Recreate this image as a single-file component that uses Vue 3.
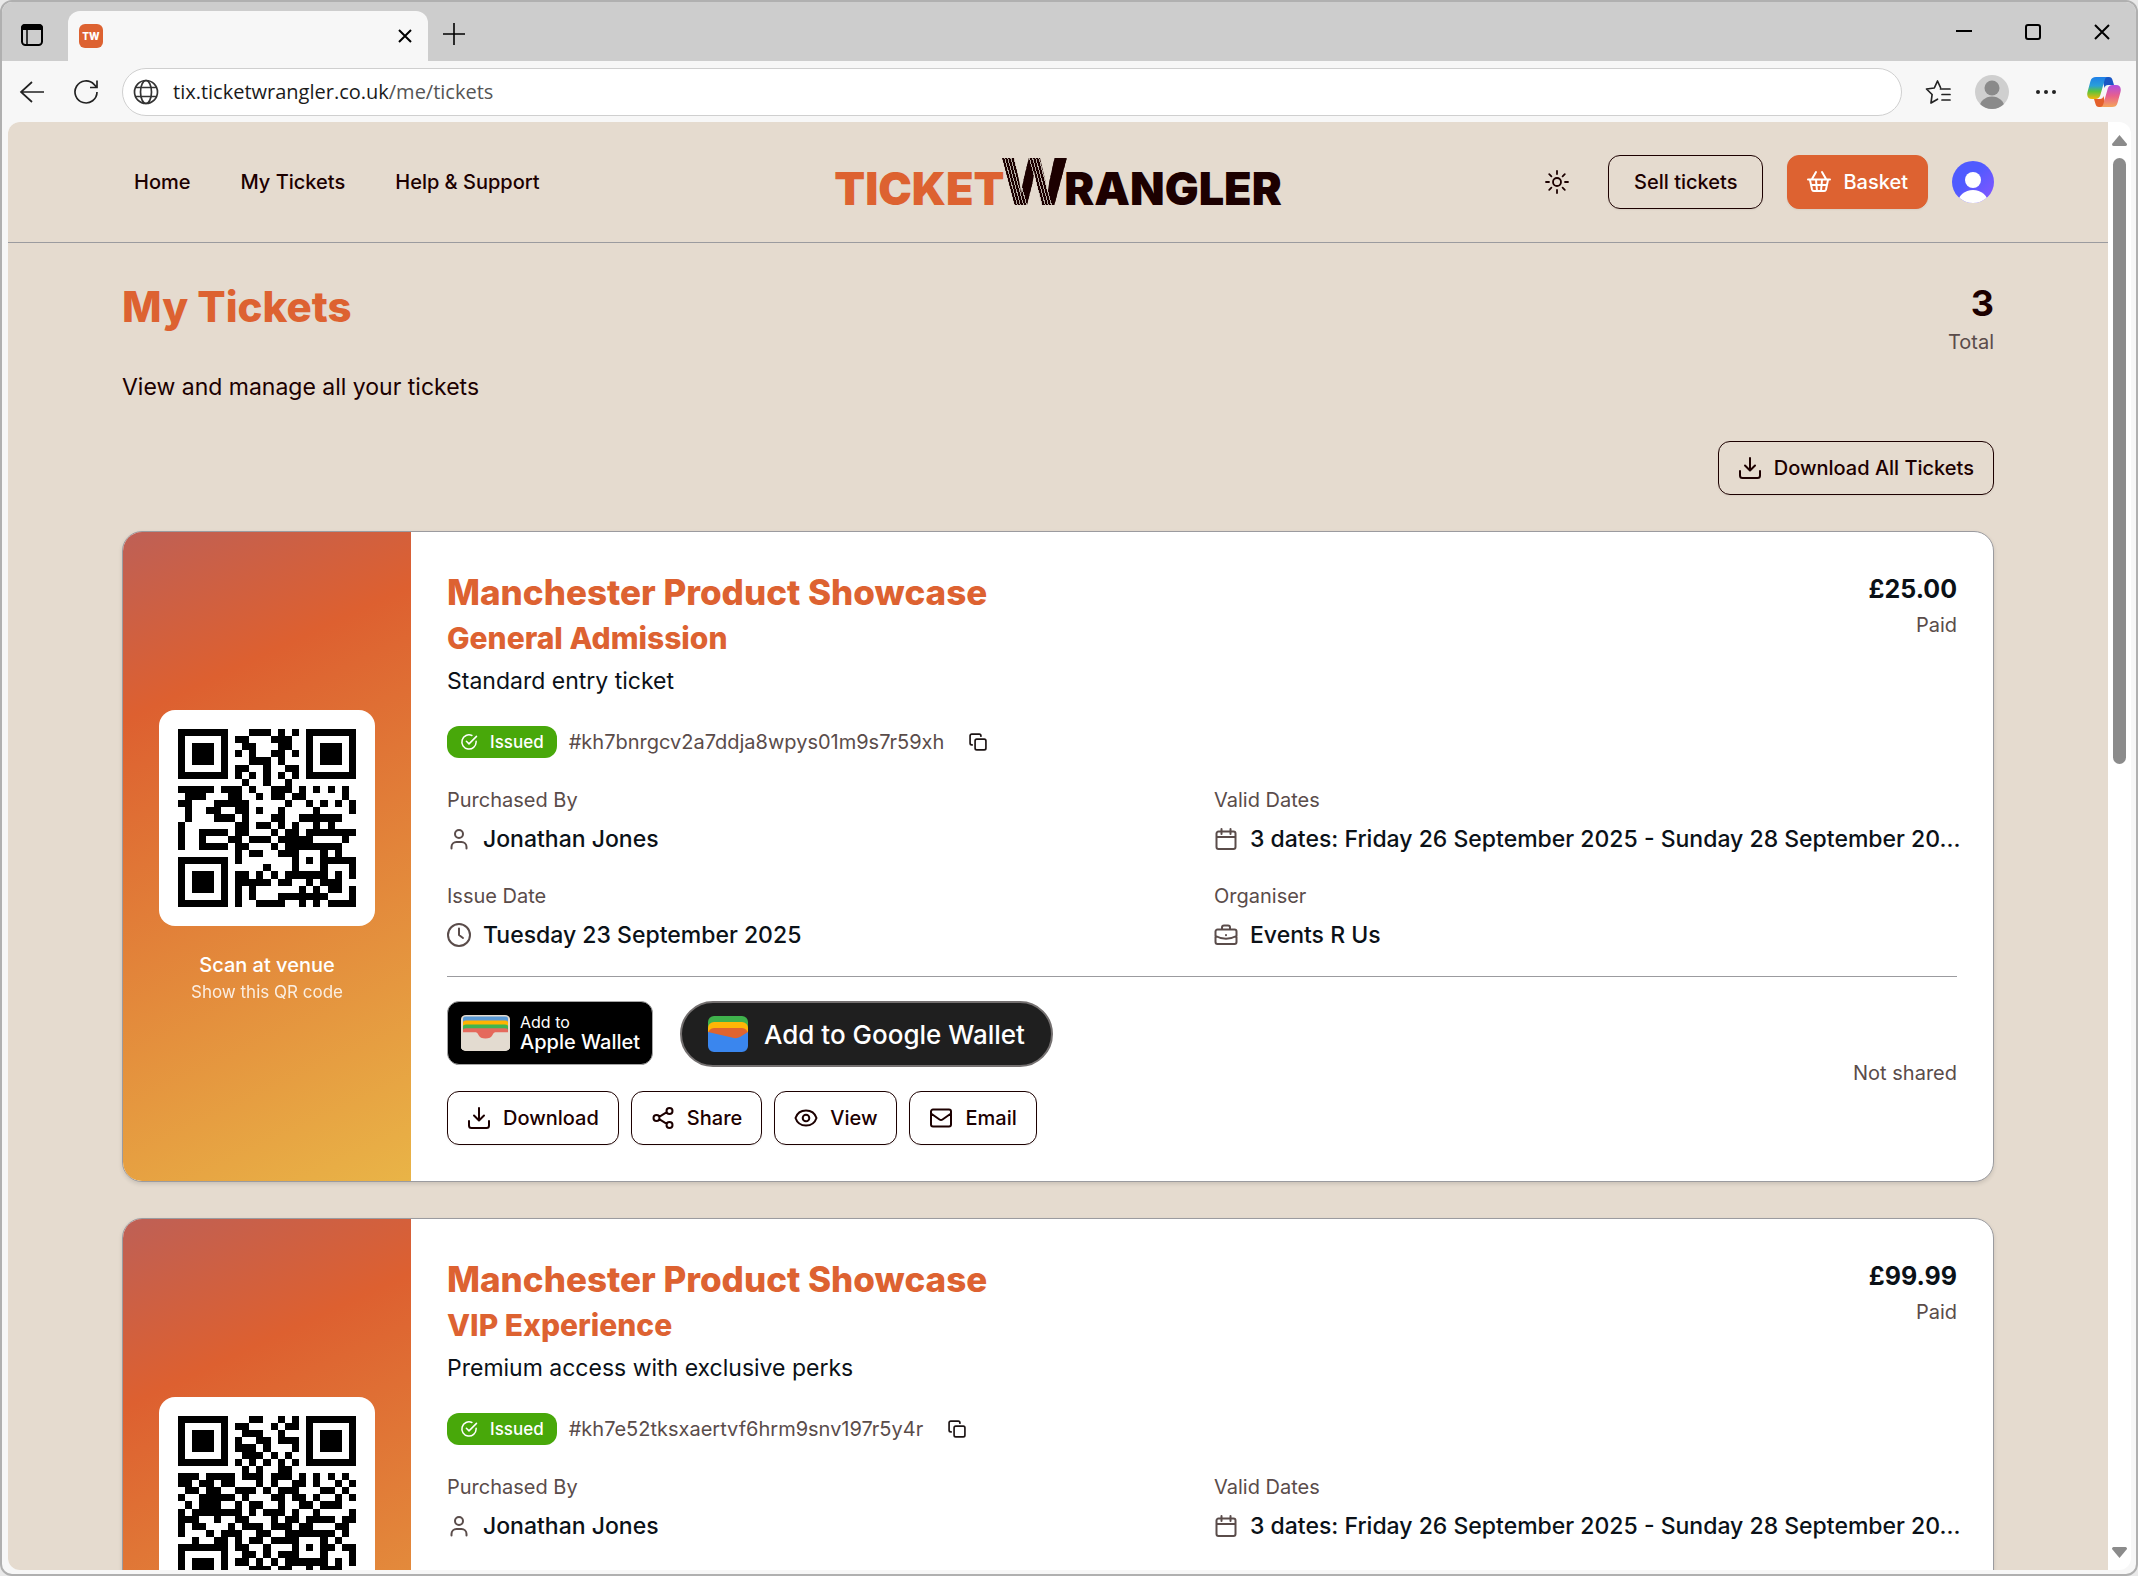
<template>
  <div class="window">
    <div class="tabstrip">
      <button class="strip-btn workspace" aria-label="Tab actions">
        <svg width="24" height="24" viewBox="0 0 24 24" fill="none" stroke="#000" stroke-width="2">
          <rect x="2" y="2" width="20" height="20" rx="3.5" />
          <path d="M2 6V5a3 3 0 0 1 3-3h14a3 3 0 0 1 3 3v1z" fill="#000" />
          <path d="M7 7v15" stroke-width="1.5" />
        </svg>
      </button>
      <div class="tab">
        <span class="favicon">TW</span>
        <button class="tab-close" aria-label="Close tab">
          <svg width="14" height="14" viewBox="0 0 14 14" stroke="#000" stroke-width="2"><path d="M1 1l12 12M13 1L1 13" /></svg>
        </button>
      </div>
      <button class="strip-btn new-tab" aria-label="New tab">
        <svg width="22" height="22" viewBox="0 0 22 22" stroke="#000" stroke-width="1.6"><path d="M11 0v22M0 11h22" /></svg>
      </button>
      <div class="controls">
        <button class="control" aria-label="Minimise">
          <svg width="16" height="16" viewBox="0 0 16 16" stroke="#000" stroke-width="2"><path d="M0 7h16" /></svg>
        </button>
        <button class="control" aria-label="Maximise">
          <svg width="16" height="16" viewBox="0 0 16 16" fill="none" stroke="#000" stroke-width="2"><rect x="1" y="1" width="14" height="14" rx="2" /></svg>
        </button>
        <button class="control" aria-label="Close">
          <svg width="16" height="16" viewBox="0 0 16 16" stroke="#000" stroke-width="2"><path d="M1 1l14 14M15 1L1 15" /></svg>
        </button>
      </div>
    </div>

    <div class="toolbar">
      <button class="tool" aria-label="Back">
        <svg width="26" height="26" viewBox="0 0 26 26" fill="none" stroke="#222" stroke-width="1.7"><path d="M25 13H2M13 3L2 13l11 10" /></svg>
      </button>
      <button class="tool" aria-label="Refresh">
        <svg width="26" height="26" viewBox="0 0 26 26" fill="none" stroke="#222" stroke-width="1.7"><path d="M24 13a11 11 0 1 1-3-7.6L23.500 8M24 1.500V8.500H17" /></svg>
      </button>
      <div class="address">
        <svg width="26" height="26" viewBox="0 0 26 26" fill="none" stroke="#333" stroke-width="1.7">
          <circle cx="13" cy="13" r="11.500" />
          <ellipse cx="13" cy="13" rx="5.500" ry="11.500" />
          <path d="M2.500 8.500h21M2.500 17.500h21" />
        </svg>
        <span class="url">tix.ticketwrangler.co.uk<span class="path">/me/tickets</span></span>
      </div>
      <button class="tool" aria-label="Favourites">
        <svg width="26" height="26" viewBox="0 0 26 26" fill="none" stroke="#222" stroke-width="1.7" stroke-linejoin="round" stroke-linecap="round">
          <path d="M15.500 8.500L12.500 2 9.300 9 1.500 10l5.600 5.500L6 24l6.500-3.800M15.500 10H25M17 15.500h8M17 21h8" />
        </svg>
      </button>
      <button class="tool" aria-label="Profile">
        <svg width="34" height="34" viewBox="0 0 34 34">
          <clipPath id="who"><circle cx="17" cy="17" r="17" /></clipPath>
          <g clip-path="url(#who)">
            <rect width="34" height="34" fill="#cfcfcf" />
            <circle cx="17" cy="13" r="7.500" fill="#8a8a8a" />
            <ellipse cx="17" cy="33" rx="12.500" ry="11.500" fill="#8a8a8a" />
          </g>
        </svg>
      </button>
      <button class="tool" aria-label="More">
        <svg width="22" height="6" viewBox="0 0 22 6" fill="#222"><circle cx="3" cy="3" r="2" /><circle cx="11" cy="3" r="2" /><circle cx="19" cy="3" r="2" /></svg>
      </button>
      <button class="tool copilot" aria-label="Copilot">
        <svg width="34" height="32" viewBox="0 0 34 32">
          <defs>
            <linearGradient id="cpA" x1="0" y1="0" x2="0" y2="1"><stop offset="0" stop-color="#1f7fe8" /><stop offset=".4" stop-color="#2a9fd8" /><stop offset=".65" stop-color="#5bc43c" /><stop offset="1" stop-color="#f5b60a" /></linearGradient>
            <linearGradient id="cpB" x1="0" y1="0" x2="0" y2="1"><stop offset="0" stop-color="#b04fe0" /><stop offset=".5" stop-color="#e8608c" /><stop offset="1" stop-color="#f4a55a" /></linearGradient>
          </defs>
          <path d="M15 1h7c2 0 3 1 3.500 3l1.500 5h-6c-2 0-3 1-3.500 3z" fill="#1a57c4" />
          <path d="M19 31h-7c-2 0-3-1-3.500-3L7 23h6c2 0 3-1 3.500-3z" fill="#e4602b" />
          <path d="M9 1h12c-2 0-3 1.500-3.500 3.500l-4 14C12.500 22 11 23 8 23H5c-4 0-5.500-3-4.500-7L3.500 5C4.500 2 6 1 9 1z" fill="url(#cpA)" />
          <path d="M25 31H13c2 0 3-1.500 3.500-3.500l4-14C21.500 10 23 9 26 9h3c4 0 5.500 3 4.500 7l-3 11c-1 3-2.500 4-5.500 4z" fill="url(#cpB)" />
        </svg>
      </button>
    </div>

    <div class="viewport">
      <div class="page">
        <header class="site-header">
          <div class="container header-row">
            <nav class="nav">
              <a href="#">Home</a>
              <a href="#">My Tickets</a>
              <a href="#">Help &amp; Support</a>
            </nav>
            <a href="#" class="logo"><span class="logo-ticket">TICKET</span><span class="logo-w">W</span><span>RANGLER</span></a>
            <div class="actions">
              <button class="theme" aria-label="Toggle theme">
                <svg width="26" height="26" viewBox="0 0 26 26" fill="none" stroke="#1c0000" stroke-width="1.8" stroke-linecap="round">
                  <circle cx="13" cy="13" r="4" />
                  <path d="M13 2v3M13 21v3M2 13h3M21 13h3M5.200 5.200l2.200 2.200M18.600 18.600l2.200 2.200M5.200 20.800l2.200-2.200M18.600 7.400l2.200-2.200" />
                </svg>
              </button>
              <button class="btn sell">Sell tickets</button>
              <button class="btn primary">
                <svg class="icon" viewBox="0 0 24 24"><path d="M1 9.500h22M3 10l2 9.500A2 2 0 0 0 7 21h10a2 2 0 0 0 2-1.500L21 10M5 9l4-7M19 9l-4-7M4 15h16M9 10l1 11M15 10l-1 11" /></svg>
                Basket
              </button>
              <button class="avatar" aria-label="Account">
                <svg width="42" height="42" viewBox="0 0 42 42">
                  <defs>
                    <linearGradient id="av" x1="0" y1="0" x2="1" y2="1"><stop offset=".4" stop-color="#4f5bff" /><stop offset="1" stop-color="#8a55ff" /></linearGradient>
                    <clipPath id="avc"><circle cx="21" cy="21" r="21" /></clipPath>
                  </defs>
                  <g clip-path="url(#avc)">
                    <rect width="42" height="42" fill="url(#av)" />
                    <circle cx="21" cy="19" r="8" fill="#fff" />
                    <ellipse cx="21" cy="42" rx="15" ry="13" fill="#fff" />
                  </g>
                </svg>
              </button>
            </div>
          </div>
        </header>

        <main class="container main">
          <div class="heading">
            <div>
              <h1>My Tickets</h1>
              <p class="intro">View and manage all your tickets</p>
            </div>
            <div class="total">
              <div class="count">3</div>
              <div class="muted">Total</div>
            </div>
          </div>

          <button class="btn download-all">
            <svg class="icon" viewBox="0 0 24 24"><path :d="icons.download" /></svg>
            Download All Tickets
          </button>

          <article v-for="ticket in tickets" :key="ticket.id" class="card">
            <aside class="scan">
              <div class="qr">
                <svg viewBox="0 0 25 25" shape-rendering="crispEdges" role="img" aria-label="Ticket QR code"><path :d="qrPath(ticket.qr)" /></svg>
              </div>
              <div class="scan-title">Scan at venue</div>
              <div class="scan-sub">Show this QR code</div>
            </aside>
            <div class="details">
              <div class="top">
                <div>
                  <h2>{{ ticket.event }}</h2>
                  <h3>{{ ticket.type }}</h3>
                  <p class="desc">{{ ticket.description }}</p>
                </div>
                <div class="paid">
                  <div class="price">{{ ticket.price }}</div>
                  <div class="muted">Paid</div>
                </div>
              </div>
              <div class="status">
                <span class="badge">
                  <svg width="18" height="18" viewBox="0 0 24 24" fill="none" stroke="#fff" stroke-width="2" stroke-linecap="round" stroke-linejoin="round"><path :d="icons.check" /></svg>
                  Issued
                </span>
                <span class="muted">#{{ ticket.id }}</span>
                <button class="copy" aria-label="Copy ticket number">
                  <svg width="20" height="20" viewBox="0 0 24 24" fill="none" stroke="#1c1414" stroke-width="2" stroke-linecap="round" stroke-linejoin="round"><path :d="icons.copy" /></svg>
                </button>
              </div>
              <dl class="facts">
                <div v-for="fact in ticket.facts" :key="fact.label">
                  <dt class="muted">{{ fact.label }}</dt>
                  <dd>
                    <svg class="icon fact-icon" viewBox="0 0 24 24"><path :d="icons[fact.icon]" /></svg>
                    {{ fact.value }}
                  </dd>
                </div>
              </dl>
              <div class="footer">
                <div class="footer-left">
                  <div class="wallets">
                    <button class="apple">
                      <svg width="49" height="36" viewBox="0 0 49 46" preserveAspectRatio="none">
                        <rect width="49" height="46" rx="5" fill="#e3dbd0" />
                        <rect x="2" y="2" width="45" height="20" rx="3" fill="#5b9ad5" />
                        <path d="M2 10a3 3 0 0 1 3-3h39a3 3 0 0 1 3 3v12H2z" fill="#ffb400" />
                        <path d="M2 15a3 3 0 0 1 3-3h39a3 3 0 0 1 3 3v8H2z" fill="#40b450" />
                        <path d="M2 20a3 3 0 0 1 3-3h39a3 3 0 0 1 3 3v3H2z" fill="#e5695c" />
                        <path d="M0 22h49v19a5 5 0 0 1-5 5H5a5 5 0 0 1-5-5z" fill="#e3dbd0" />
                        <path d="M13 21h23c-3 1-3.500 2-4.500 4.500-1 3-3.500 4.500-7 4.500s-6-1.500-7-4.500C16.500 23 16 22 13 21z" fill="#e5695c" />
                      </svg>
                      <span class="apple-text"><small>Add to</small>Apple Wallet</span>
                    </button>
                    <button class="google">
                      <svg width="40" height="36" viewBox="0 0 40 36">
                        <rect width="40" height="28" y="0" rx="6" fill="#3fb24c" />
                        <rect width="40" height="24" y="6" rx="6" fill="#ffb606" />
                        <path d="M0 18a6 6 0 0 1 6-6h28a6 6 0 0 1 6 6v8H0z" fill="#e0642f" />
                        <path d="M0 16l26 6c2 .500 4 0 6-1l8-5v14a6 6 0 0 1-6 6H6a6 6 0 0 1-6-6z" fill="#3a86ee" />
                      </svg>
                      Add to Google Wallet
                    </button>
                  </div>
                  <div class="ticket-actions">
                    <button v-for="action in actions" :key="action.label" class="btn">
                      <svg class="icon" viewBox="0 0 24 24"><path :d="icons[action.icon]" /></svg>
                      {{ action.label }}
                    </button>
                  </div>
                </div>
                <div class="muted">Not shared</div>
              </div>
            </div>
          </article>
        </main>
      </div>
      <div class="scrollbar">
        <svg width="15" height="11" viewBox="0 0 15 11"><path d="M7.500 0L15 9c0 1-.5 2-1.500 2h-12C.5 11 0 10 0 9z" fill="#8b8b8b" /></svg>
        <div class="track"><div class="thumb"></div></div>
        <svg width="15" height="11" viewBox="0 0 15 11"><path d="M7.500 11L15 2c0-1-.5-2-1.500-2h-12C.5 0 0 1 0 2z" fill="#8b8b8b" /></svg>
      </div>
    </div>
  </div>
</template>

<script setup>
const icons = {
  download: 'M12 2v12M7 9.500l5 5 5-5M2 15v4.500A2.500 2.500 0 0 0 4.500 22h15a2.500 2.500 0 0 0 2.500-2.500V15',
  share: 'M8.200 10.800l7.600-4.600M8.200 13.200l7.600 4.600M8.500 12a3 3 0 1 1-6 0 3 3 0 0 1 6 0zM21.500 5a3 3 0 1 1-6 0 3 3 0 0 1 6 0zM21.500 19a3 3 0 1 1-6 0 3 3 0 0 1 6 0z',
  eye: 'M1.500 12C3 7.500 7 4.500 12 4.500S21 7.500 22.500 12C21 16.500 17 19.500 12 19.500S3 16.500 1.500 12zM15.300 12a3.300 3.300 0 1 1-6.600 0 3.300 3.300 0 0 1 6.600 0z',
  mail: 'M4 3.500h16a2 2 0 0 1 2 2v13a2 2 0 0 1-2 2H4a2 2 0 0 1-2-2v-13a2 2 0 0 1 2-2zM2 7.500l8.500 6a2.500 2.500 0 0 0 3 0l8.500-6',
  user: 'M16 7a4 4 0 1 1-8 0 4 4 0 0 1 8 0zM4.500 21.500v-1.500a5 5 0 0 1 5-5h5a5 5 0 0 1 5 5v1.500',
  clock: 'M23 12a11 11 0 1 1-22 0 11 11 0 0 1 22 0zM12 5.500V12l4 3',
  calendar: 'M4.500 4.500h15a2 2 0 0 1 2 2v13.500a2 2 0 0 1-2 2h-15a2 2 0 0 1-2-2V6.500a2 2 0 0 1 2-2zM2.500 10h19M7.500 2v5M16.500 2v5',
  briefcase: 'M3.500 6.500h17a2 2 0 0 1 2 2V19a2 2 0 0 1-2 2h-17a2 2 0 0 1-2-2V8.500a2 2 0 0 1 2-2zM8 6.500v-2a2 2 0 0 1 2-2h4a2 2 0 0 1 2 2v2M1.500 13c6 3.500 15 3.500 21 0M12 12v.2',
  check: 'M21.500 11v1a9.500 9.500 0 1 1-5.600-8.700M22 4.500L12 14.500l-3.500-3.500',
  copy: 'M10.500 8.500h9a2 2 0 0 1 2 2v9a2 2 0 0 1-2 2h-9a2 2 0 0 1-2-2v-9a2 2 0 0 1 2-2zM5 15.500H4.500a2 2 0 0 1-2-2v-9a2 2 0 0 1 2-2h9a2 2 0 0 1 2 2V5'
}

const actions = [
  { icon: 'download', label: 'Download' },
  { icon: 'share', label: 'Share' },
  { icon: 'eye', label: 'View' },
  { icon: 'mail', label: 'Email' }
]

const facts = [
  { icon: 'user', label: 'Purchased By', value: 'Jonathan Jones' },
  { icon: 'calendar', label: 'Valid Dates', value: '3 dates: Friday 26 September 2025 - Sunday 28 September 20...' },
  { icon: 'clock', label: 'Issue Date', value: 'Tuesday 23 September 2025' },
  { icon: 'briefcase', label: 'Organiser', value: 'Events R Us' }
]

const tickets = [
  {
    id: 'kh7bnrgcv2a7ddja8wpys01m9s7r59xh',
    event: 'Manchester Product Showcase',
    type: 'General Admission',
    description: 'Standard entry ticket',
    price: '£25.00',
    facts,
    qr: [
      '1111111000111010101111111',
      '1000001011000111001000001',
      '1011101001100011001011101',
      '1011101010100110101011101',
      '1011101000111010001011101',
      '1000001011001001101000001',
      '1111111010101010101111111',
      '0000000001001001000000000',
      '1111101110100111010101010',
      '0111000110010110110000010',
      '1100011111000001001010101',
      '0100110011010010000100001',
      '0100011101000110011111100',
      '1000000011011010100101000',
      '1001111011000101101111111',
      '1001000110111011111000010',
      '1001111011000101111111100',
      '0000000010110011100010100',
      '1111111010000000101011111',
      '1000001000001000100010001',
      '1011101011010101111110101',
      '1011101011111011001011100',
      '1011101010100000010101101',
      '1000001010100011111110001',
      '1111111010011110010101111'
    ]
  },
  {
    id: 'kh7e52tksxaertvf6hrm9snv197r5y4r',
    event: 'Manchester Product Showcase',
    type: 'VIP Experience',
    description: 'Premium access with exclusive perks',
    price: '£99.99',
    facts,
    qr: [
      '1111111000110010101111111',
      '1000001011000101101000001',
      '1011101001110010001011101',
      '1011101010011011101011101',
      '1011101011101000101011101',
      '1000001001110101001000001',
      '1111111010101010101111111',
      '0000000001010011000000000',
      '1110111101110111010101010',
      '1101101100010100110100101',
      '0110110011101011100011010',
      '1001111101000110110100101',
      '0101110010110010011011100',
      '1011111110101110100100001',
      '1110010011000101101111011',
      '1011000101110111011000110',
      '1000101110011001111111010',
      '0010011010110111100010100',
      '1111111011001000101011011',
      '1000001001101011100010001',
      '1011101011010101111110101',
      '1011101000111011001011100',
      '1011101011100100010101101',
      '1000001010100011111110001',
      '1111111010011110010101111'
    ]
  }
]

const qrPath = (rows) => {
  let d = ''
  rows.forEach((row, y) => {
    for (const run of row.matchAll(/1+/g)) {
      d += `M${run.index} ${y}h${run[0].length}v1h-${run[0].length}z`
    }
  })
  return d
}
</script>

<style>
body {
  background: #e9e9e9;
}
</style>

<style scoped>
* {
  box-sizing: border-box;
}

.window {
  height: 100vh;
  display: flex;
  flex-direction: column;
  border: 2px solid #b0b0b0;
  border-radius: 12px;
  background: #f7f7f7;
  overflow: hidden;
  font-family: Inter, "Liberation Sans", sans-serif;
  font-size: 20px;
  color: #0b1117;
}

button {
  margin: 0;
  padding: 0;
  border: 0;
  background: none;
  font: inherit;
  color: inherit;
}

button,
a {
  cursor: pointer;
}

svg {
  display: block;
  flex: none;
}

/* browser chrome */
.tabstrip {
  display: flex;
  align-items: flex-end;
  height: 59px;
  background: #cdcdcd;
}

.strip-btn {
  display: grid;
  place-items: center;
  height: 52px;
}

.workspace {
  width: 60px;
  margin-right: 6px;
}

.new-tab {
  width: 52px;
  height: 54px;
}

.tab {
  display: flex;
  align-items: center;
  justify-content: space-between;
  width: 360px;
  height: 50px;
  padding: 0 16px 0 11px;
  border-radius: 12px 12px 0 0;
  background: #f7f7f7;
}

.favicon {
  width: 24px;
  height: 24px;
  border-radius: 6px;
  background: #dd6231;
  color: #fff;
  font-size: 10px;
  font-weight: 800;
  line-height: 24px;
  text-align: center;
}

.controls {
  display: flex;
  margin-left: auto;
}

.control {
  display: grid;
  place-items: center;
  width: 69px;
  height: 59px;
}

.toolbar {
  display: flex;
  align-items: center;
  height: 61px;
  padding: 0 1px 0 3px;
}

.tool {
  display: grid;
  place-items: center;
  width: 54px;
  height: 48px;
}

.copilot {
  width: 62px;
}

.address {
  flex: 1;
  display: flex;
  align-items: center;
  gap: 14px;
  height: 48px;
  margin: 0 9px;
  padding: 0 10px;
  border: 1px solid #cfcfcf;
  border-radius: 24px;
  background: #fff;
}

.url {
  font-family: "Open Sans", sans-serif;
  font-size: 20px;
  color: #1a1a1a;
}

.path {
  color: #555;
}

.viewport {
  flex: 1;
  min-height: 0;
  display: flex;
  margin: 0 5px 4px 6px;
  border-radius: 12px;
  background: #fff;
  overflow: hidden;
}

.page {
  flex: 1;
  overflow: hidden;
  background: #e5dbcf;
}

.scrollbar {
  width: 23px;
  display: flex;
  flex-direction: column;
  align-items: center;
  gap: 12px;
  padding: 13px 0 12px;
}

.track {
  flex: 1;
}

.thumb {
  width: 13px;
  height: 44%;
  border-radius: 7px;
  background: #8b8b8b;
}

/* site header */
.container {
  max-width: 1872px;
  margin: 0 auto;
}

.site-header {
  border-bottom: 1px solid #9b9b9f;
  color: #1c0000;
}

.header-row {
  display: grid;
  grid-template-columns: 1fr auto 1fr;
  align-items: center;
  height: 120px;
}

.nav {
  display: flex;
  gap: 50px;
  padding-left: 12px;
  font-weight: 500;
}

.nav a {
  color: inherit;
  text-decoration: none;
}

.logo {
  display: flex;
  align-items: baseline;
  height: 60px;
  font-size: 45px;
  font-weight: 900;
  line-height: 60px;
  color: #1c0000;
  text-decoration: none;
}

.logo-ticket {
  color: #dd6231;
}

/* pinstripes run along the two falling strokes, the rising ones stay solid */
.logo-w {
  margin: 0 -4px;
  font-size: 64px;
  font-weight: 800;
  line-height: 60px;
  background:
    linear-gradient(75deg, transparent 0 27px, #1c0000 27px 39px, transparent 39px 53px, #1c0000 53px),
    repeating-linear-gradient(75deg, #1c0000 0 2px, #b3aaa1 2px 3px);
  background-clip: text;
  color: transparent;
}

.actions {
  display: flex;
  align-items: center;
  justify-content: flex-end;
  gap: 24px;
}

.theme {
  display: grid;
  place-items: center;
  width: 54px;
  height: 54px;
}

.btn {
  display: inline-flex;
  align-items: center;
  gap: 12px;
  height: 54px;
  padding: 0 19px;
  border: 1px solid #1c0000;
  border-radius: 12px;
  font-weight: 500;
  color: #1c0000;
  box-shadow: 0 1px 2px rgba(0, 0, 0, 0.06);
}

.sell {
  padding: 0 25px;
}

.primary {
  border-color: #dd6231;
  background: #dd6231;
  color: #fff;
}

.icon {
  width: 24px;
  height: 24px;
  fill: none;
  stroke: currentColor;
  stroke-width: 2;
  stroke-linecap: round;
  stroke-linejoin: round;
}

/* page heading */
.main {
  display: flex;
  flex-direction: column;
  gap: 36px;
  padding: 36px 0;
}

.heading {
  display: flex;
  justify-content: space-between;
}

h1,
h2,
h3,
p,
dl,
dd {
  margin: 0;
}

h1,
h2,
h3 {
  font-weight: 800;
  color: #dd6231;
}

h1 {
  font-size: 42px;
  line-height: 56px;
}

.intro {
  margin-top: 34px;
  font-size: 23px;
  line-height: 36px;
  color: #1c0000;
}

.total,
.paid {
  text-align: right;
}

.muted {
  line-height: 30px;
  color: #5a4c4a;
}

.count {
  font-size: 36px;
  font-weight: 700;
  line-height: 48px;
  color: #1c0000;
}

.download-all {
  align-self: flex-end;
}

/* ticket card */
.card {
  display: flex;
  border: 1px solid #9b9b9f;
  border-radius: 20px;
  background: #fff;
  box-shadow: 0 2px 4px rgba(0, 0, 0, 0.12);
  overflow: hidden;
}

.scan {
  display: flex;
  flex-direction: column;
  align-items: center;
  justify-content: center;
  flex: none;
  width: 288px;
  background: linear-gradient(155deg, #be6056, #dd6030 24%, #e9b447);
  color: #fff;
}

.qr {
  width: 216px;
  margin-bottom: 24px;
  padding: 19px;
  border-radius: 16px;
  background: #fff;
}

.scan-title {
  font-weight: 500;
  line-height: 30px;
}

.scan-sub {
  font-size: 17px;
  line-height: 24px;
  opacity: 0.85;
}

.details {
  flex: 1;
  min-width: 0;
  padding: 36px;
}

.top,
.footer {
  display: flex;
  justify-content: space-between;
}

h2 {
  font-size: 35px;
  line-height: 48px;
}

h3 {
  font-size: 30px;
  line-height: 44px;
}

.desc {
  font-size: 23px;
  line-height: 42px;
}

.price {
  font-size: 25px;
  font-weight: 700;
  line-height: 42px;
}

.status {
  display: flex;
  align-items: center;
  gap: 12px;
  height: 32px;
  margin-top: 24px;
}

.badge {
  display: flex;
  align-items: center;
  gap: 12px;
  height: 32px;
  padding: 0 13px;
  border-radius: 12px;
  background: #48a80a;
  color: #fff;
  font-size: 17px;
  font-weight: 500;
}

.copy {
  margin-left: 12px;
}

.facts {
  display: grid;
  grid-template-columns: 1fr 1fr;
  gap: 18px 24px;
  margin-top: 24px;
}

.facts > div {
  min-width: 0;
}

dt.muted {
  line-height: 36px;
}

dd {
  display: flex;
  align-items: center;
  gap: 12px;
  font-size: 23px;
  font-weight: 500;
  line-height: 42px;
  white-space: nowrap;
}

.fact-icon {
  color: #5a4c4a;
}

.footer {
  align-items: center;
  margin-top: 20px;
  padding-top: 24px;
  border-top: 1px solid #9b9b9f;
}

.footer-left {
  display: flex;
  flex-direction: column;
  gap: 24px;
}

.wallets {
  display: flex;
  gap: 27px;
}

.apple {
  display: flex;
  align-items: center;
  gap: 10px;
  height: 64px;
  padding: 0 12px 0 13px;
  border: 1px solid #a6a6a6;
  border-radius: 12px;
  background: #000;
  color: #fff;
  font-weight: 500;
  line-height: 22px;
}

.apple-text {
  text-align: left;
}

.apple small {
  display: block;
  font-size: 16px;
  font-weight: 400;
  line-height: 18px;
}

.google {
  display: flex;
  align-items: center;
  gap: 16px;
  height: 66px;
  padding: 0 26px;
  border: 2px solid #747070;
  border-radius: 33px;
  background: #1f1f1f;
  color: #fff;
  font-size: 26px;
  font-weight: 500;
}

.ticket-actions {
  display: flex;
  gap: 12px;
}
</style>
